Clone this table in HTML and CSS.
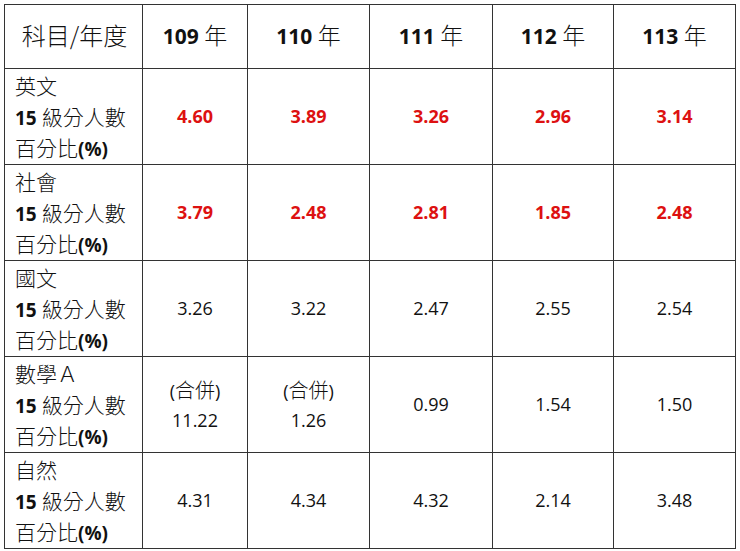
FILE: index.html
```html
<!DOCTYPE html>
<html lang="zh-Hant">
<head>
<meta charset="utf-8">
<link rel="stylesheet" href="styles.css">
</head>
<body>
<table class="grid">
  <colgroup>
    <col class="c0"><col class="c1"><col class="c2"><col class="c3"><col class="c4"><col class="c5">
  </colgroup>
  <thead>
    <tr class="head">
      <th class="corner">科目/年度</th>
      <th><b>109</b> <span class="nian">年</span></th>
      <th><b>110</b> <span class="nian">年</span></th>
      <th><b>111</b> <span class="nian">年</span></th>
      <th><b>112</b> <span class="nian">年</span></th>
      <th><b>113</b> <span class="nian">年</span></th>
    </tr>
  </thead>
  <tbody>
    <tr>
      <td class="label"><div class="ln cjk">英文</div><div class="ln"><b>15</b> <span class="cjk">級分人數</span></div><div class="ln"><span class="cjk">百分比</span><b>(%)</b></div></td>
      <td class="num hot">4.60</td><td class="num hot">3.89</td><td class="num hot">3.26</td><td class="num hot">2.96</td><td class="num hot">3.14</td>
    </tr>
    <tr>
      <td class="label"><div class="ln cjk">社會</div><div class="ln"><b>15</b> <span class="cjk">級分人數</span></div><div class="ln"><span class="cjk">百分比</span><b>(%)</b></div></td>
      <td class="num hot">3.79</td><td class="num hot">2.48</td><td class="num hot">2.81</td><td class="num hot">1.85</td><td class="num hot">2.48</td>
    </tr>
    <tr>
      <td class="label"><div class="ln cjk">國文</div><div class="ln"><b>15</b> <span class="cjk">級分人數</span></div><div class="ln"><span class="cjk">百分比</span><b>(%)</b></div></td>
      <td class="num">3.26</td><td class="num">3.22</td><td class="num">2.47</td><td class="num">2.55</td><td class="num">2.54</td>
    </tr>
    <tr>
      <td class="label"><div class="ln cjk">數學Ａ</div><div class="ln"><b>15</b> <span class="cjk">級分人數</span></div><div class="ln"><span class="cjk">百分比</span><b>(%)</b></div></td>
      <td class="num"><div class="ln">(<span class="cjk">合併</span>)</div><div class="ln">11.22</div></td><td class="num"><div class="ln">(<span class="cjk">合併</span>)</div><div class="ln">1.26</div></td><td class="num">0.99</td><td class="num">1.54</td><td class="num">1.50</td>
    </tr>
    <tr>
      <td class="label"><div class="ln cjk">自然</div><div class="ln"><b>15</b> <span class="cjk">級分人數</span></div><div class="ln"><span class="cjk">百分比</span><b>(%)</b></div></td>
      <td class="num">4.31</td><td class="num">4.34</td><td class="num">4.32</td><td class="num">2.14</td><td class="num">3.48</td>
    </tr>
  </tbody>
</table>
</body>
</html>
```

FILE: styles.css
```css
html, body {
  margin: 0;
  background: #ffffff;
}
body {
  padding: 4px;
  font-family: "Open Sans", "Noto Sans CJK TC", sans-serif;
  color: #111;
}
.grid {
  border-collapse: collapse;
  table-layout: fixed;
  width: 731px;
}
.c0 { width: 138px; }
.c1 { width: 105px; }
.c2 { width: 122px; }
.c3 { width: 123px; }
.c4 { width: 121px; }
.c5 { width: 122px; }
.grid th, .grid td {
  border: 1.5px solid #333;
  padding: 0;
  overflow: hidden;
}
.head { height: 64px; }
.grid tbody tr { height: 96px; }
.grid th {
  font-size: 21px;
  line-height: 30px;
  font-weight: 400;
  text-align: center;
  padding-bottom: 4px;
}
.grid th b { font-weight: 700; }
.nian {
  font-family: "Noto Sans CJK TC", sans-serif;
  font-weight: 300;
  font-size: 23px;
}
.grid th.corner {
  font-family: "Noto Sans CJK TC", sans-serif;
  font-size: 24px;
  font-weight: 300;
  padding-left: 2px;
}
.cjk {
  font-family: "Noto Sans CJK TC", sans-serif;
  font-weight: 300;
}
.ln {
  height: 31px;
  line-height: 31px;
  overflow: visible;
  white-space: nowrap;
}
.label {
  font-size: 19px;
  padding-left: 10px !important;
  vertical-align: middle;
}
.label .cjk { font-size: 21px; }
.label .ln.cjk { font-size: 21px; }
.label b { font-weight: 700; }
.num {
  text-align: center;
  font-size: 18px;
  line-height: 31px;
}
.num .cjk { font-size: 20px; }
.hot {
  color: #dd1111;
  font-weight: 700;
}
```
